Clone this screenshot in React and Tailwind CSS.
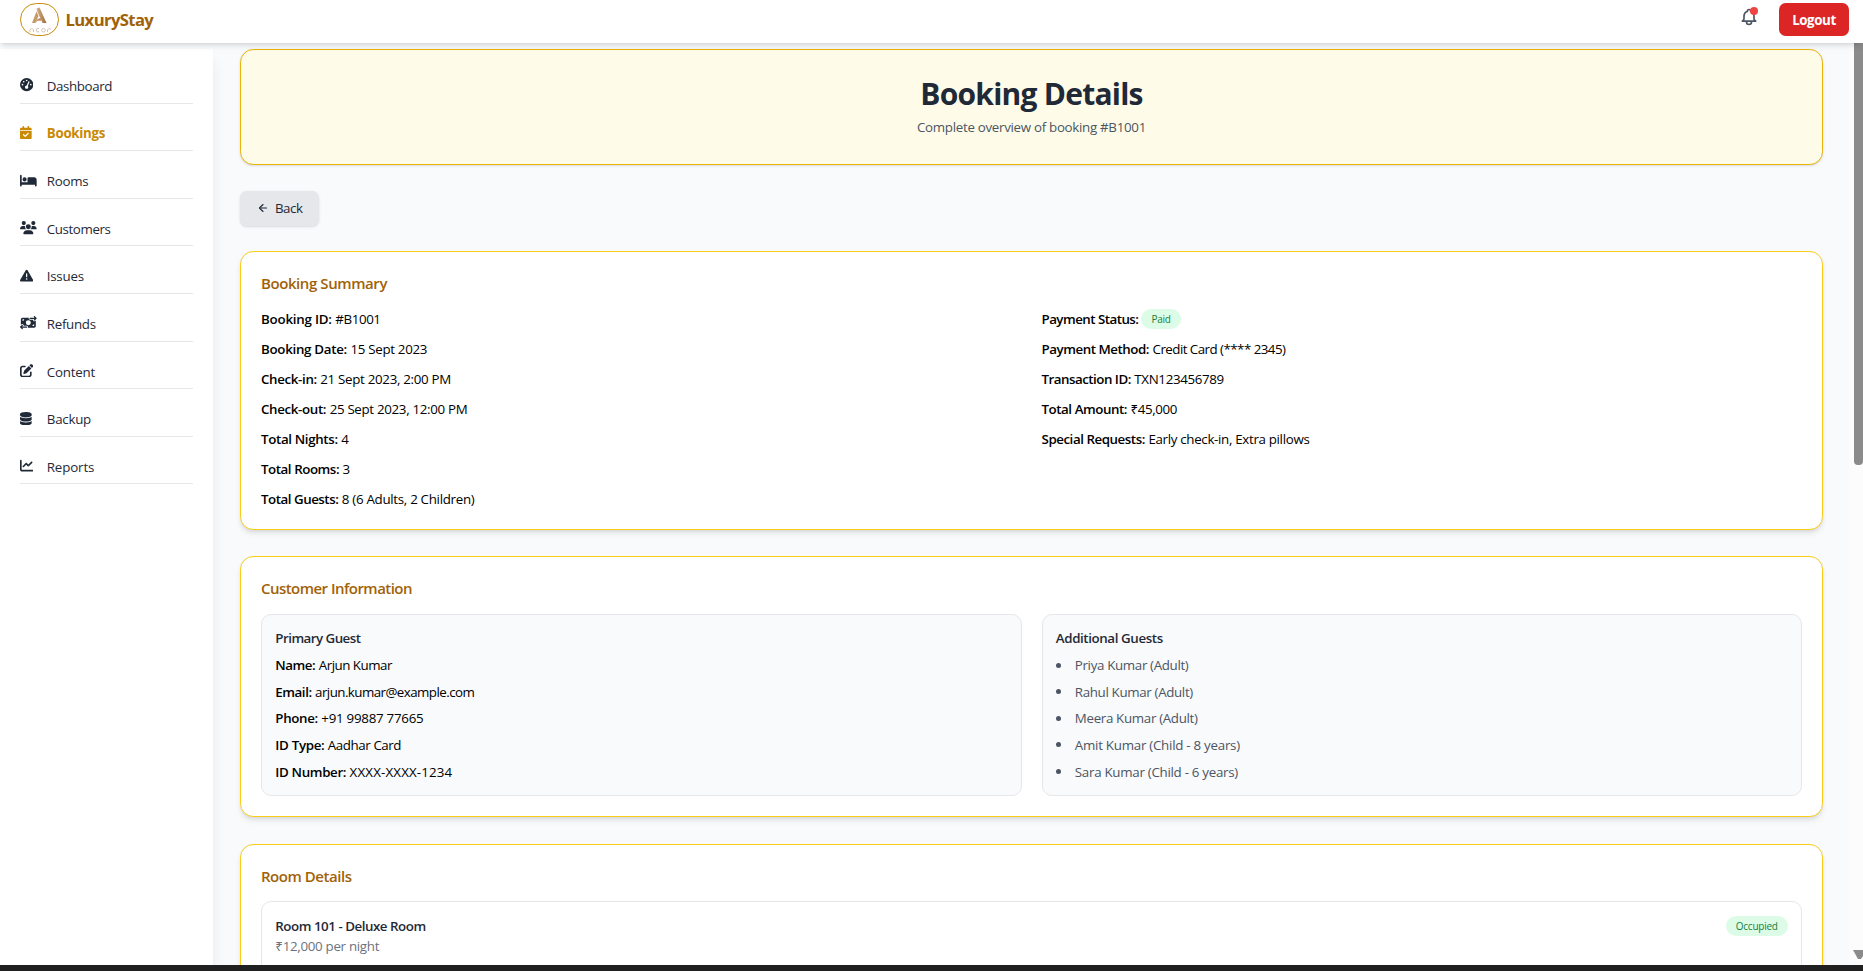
import React from "react";
import { FaGaugeHigh, FaCalendarCheck, FaBed, FaUsers, FaTriangleExclamation, FaMoneyBillTransfer, FaPenToSquare, FaDatabase, FaChartLine } from "react-icons/fa6";
import { ArrowLeft } from "lucide-react";

const NAV = [
  { label: "Dashboard", Icon: FaGaugeHigh, w: "w-[13.3px]", t: "tracking-[-0.4px]" },
  { label: "Bookings", Icon: FaCalendarCheck, w: "w-[11.7px]", active: true },
  { label: "Rooms", Icon: FaBed, w: "w-[16.7px]", t: "tracking-[-0.3px]" },
  { label: "Customers", Icon: FaUsers, w: "w-[16.7px]", t: "tracking-[-0.4px]" },
  { label: "Issues", Icon: FaTriangleExclamation, w: "w-[13.3px]", t: "tracking-[-0.25px]" },
  { label: "Refunds", Icon: FaMoneyBillTransfer, w: "w-[16.7px]", t: "tracking-[-0.3px]" },
  { label: "Content", Icon: FaPenToSquare, w: "w-[13.3px]", t: "tracking-[-0.2px]" },
  { label: "Backup", Icon: FaDatabase, w: "w-[11.7px]", t: "tracking-[-0.25px]" },
  { label: "Reports", Icon: FaChartLine, w: "w-[13.3px]", t: "tracking-[-0.15px]" },
];

const SUMMARY = [
  ["Booking ID", "#B1001", "tracking-[-0.4px]", "tracking-[-0.22px]"],
  ["Booking Date", "15 Sept 2023", "tracking-[-0.3px]", "tracking-[-0.3px]"],
  ["Check-in", "21 Sept 2023, 2:00 PM", "tracking-[-0.31px]"],
  ["Check-out", "25 Sept 2023, 12:00 PM", "tracking-[-0.32px]"],
  ["Total Nights", "4", ""],
  ["Total Rooms", "3", "", "tracking-[-0.45px]"],
  ["Total Guests", "8 (6 Adults, 2 Children)", "tracking-[-0.3px]", "tracking-[-0.48px]"],
];

const PAYMENT = [
  ["Payment Method", "Credit Card (**** 2345)", "tracking-[-0.53px]", "tracking-[-0.46px]"],
  ["Transaction ID", "TXN123456789", "tracking-[-0.35px]", "tracking-[-0.5px]"],
  ["Total Amount", "₹45,000", "tracking-[-0.4px]", "tracking-[-0.45px]"],
  ["Special Requests", "Early check-in, Extra pillows", "tracking-[-0.32px]", "tracking-[-0.45px]"],
];

const GUEST = [
  ["Name", "Arjun Kumar", "tracking-[-0.5px]", "tracking-[-0.45px]"],
  ["Email", "arjun.kumar@example.com", "tracking-[-0.55px]", "tracking-[-0.45px]"],
  ["Phone", "+91 99887 77665", "tracking-[-0.26px]"],
  ["ID Type", "Aadhar Card", "tracking-[-0.42px]", "tracking-[-0.32px]"],
  ["ID Number", "XXXX-XXXX-1234", "tracking-[0.15px]"],
];

const GUESTS = [
  ["Priya Kumar (Adult)", "tracking-[-0.34px]"],
  ["Rahul Kumar (Adult)", "tracking-[-0.34px]"],
  ["Meera Kumar (Adult)", "tracking-[-0.33px]"],
  ["Amit Kumar (Child - 8 years)", "tracking-[-0.26px]"],
  ["Sara Kumar (Child - 6 years)", "tracking-[-0.28px]"],
];

function Field({ label, labelClass = "tracking-[-0.35px]", valueClass = "", children }) {
  return (
    <p className="whitespace-nowrap">
      <span className={`font-semibold ${labelClass}`}>{label}:</span> <span className={valueClass}>{children}</span>
    </p>
  );
}

function Badge({ children }) {
  return (
    <span className="inline-flex h-5 items-center rounded-full bg-[#dcfce7] px-[10px] text-[10px] leading-none tracking-[-0.25px] text-[#15803d]">
      {children}
    </span>
  );
}

function Card({ title, titleClass = "mb-[13.33px] tracking-[-0.46px]", children }) {
  return (
    <section className="mb-[26.67px] rounded-[13.3px] border border-[#facc15] bg-white p-5 shadow-md">
      <h2 className={`text-[15px] leading-[23.33px] font-semibold text-[#a16207] ${titleClass}`}>{title}</h2>
      {children}
    </section>
  );
}

function Logo() {
  return (
    <div className="flex h-[33px] w-[39px] items-center justify-center overflow-hidden rounded-full border border-[#ca8a04] bg-white">
      <svg viewBox="0 0 39 33" className="h-[33px] w-[39px] shrink-0">
        <defs>
          <linearGradient id="gold" x1="0" x2="1">
            <stop offset="0" stopColor="#d9b48a" />
            <stop offset="1" stopColor="#9a6a3c" />
          </linearGradient>
        </defs>
        <path d="M16.500 5.500 L19.500 4.500 L26.500 20 H22.500 L17 8 Z" fill="url(#gold)" />
        <path d="M16.500 8.500 L18.500 13 L15.500 20 H12 Z" fill="#c99a68" />
        <path d="M15.500 19.500 Q18 14 21.500 15.500 L20.500 18 Q18 16.500 15.500 19.500 Z" fill="#b98a5c" />
        <g fill="none" stroke="#d6c4b4" strokeWidth="1">
          <path d="M10 29 V26.500 Q12 24.500 13.500 26.500 V29" />
          <path d="M19 25.500 H17 Q15.500 27 17 28.800 H19" />
          <circle cx="23.500" cy="27.200" r="1.800" />
          <path d="M27.500 29 V26.500 Q29 25 31 26" />
        </g>
      </svg>
    </div>
  );
}

function Bell() {
  return (
    <div className="relative mb-[6px] h-5 w-[17px]">
      <svg viewBox="0 0 24 24" className="-ml-[1.5px] h-[20px] w-[20px]" fill="none" stroke="#4b5563" strokeWidth="2" strokeLinecap="round" strokeLinejoin="round">
        <path d="M15 17h5l-1.405-1.405A2.032 2.032 0 0118 14.158V11a6.002 6.002 0 00-4-5.659V5a2 2 0 10-4 0v.341C7.670 6.165 6 8.388 6 11v3.159c0 .538-.214 1.055-.595 1.436L4 17h5m6 0v1a3 3 0 11-6 0v-1m6 0H9" />
      </svg>
      <span className="absolute top-0 -right-[1px] h-2 w-2 rounded-full bg-[#ef4444]" />
    </div>
  );
}

export default function App() {
  return (
    <div className="flex h-[971px] w-[1863px] flex-col overflow-hidden bg-[#f9fafb] font-['Open_Sans','Noto_Sans',sans-serif] text-[13.33px] leading-5 text-black">
      <header className="z-10 flex h-[43px] shrink-0 items-center justify-between bg-white pr-[14px] pb-[4px] pl-5 shadow-md">
        <div className="flex items-center gap-[6.5px]">
          <Logo />
          <span className="text-[16.67px] font-bold tracking-[-0.62px] text-[#a16207]">LuxuryStay</span>
        </div>
        <div className="flex items-center gap-[22px]">
          <Bell />
          <button className="h-[33px] w-[70px] rounded-[6.67px] bg-[#dc2626] text-[13.33px] font-bold tracking-[-0.4px] text-white">Logout</button>
        </div>
      </header>

      <div className="flex min-h-0 flex-1">
        <aside className="mt-[6px] w-[213px] shrink-0 bg-white px-5 pt-[20.2px] shadow-lg">
          <nav className="flex flex-col gap-[13.3px]">
            {NAV.map(({ label, Icon, w, t, active }) => (
              <a
                key={label}
                className={
                  active
                    ? "flex items-center border-b border-[#e5e7eb] py-[6.67px] font-bold tracking-[-0.3px] text-[#ca8a04]"
                    : `flex items-center border-b border-[#e5e7eb] py-[6.67px] font-medium text-[#1f2937] ${t}`
                }
              >
                <span className="flex w-[26.8px] items-center pb-[1.5px]">
                  <Icon className={`h-[13.3px] ${w}`} />
                </span>
                {label}
              </a>
            ))}
          </nav>
        </aside>

        <main className="min-w-0 flex-1 overflow-hidden pt-[6.3px] pr-[26px] pl-[27px]">
          <div className="rounded-[13.3px] border border-[#eab308] bg-[#fefce8] p-[26.67px] text-center shadow-sm">
            <h1 className="text-[30px] leading-[33.33px] font-bold tracking-[-0.76px] text-[#1f2937]">Booking Details</h1>
            <p className="mt-[6.67px] tracking-[-0.3px] text-[#4b5563]">Complete overview of booking #B1001</p>
          </div>

          <button className="mt-[26.3px] mb-[25px] flex h-[34.7px] w-[79px] items-center gap-[6px] rounded-[6.67px] bg-[#e5e7eb] pb-px pl-[17px] text-[#1f2937] shadow-sm">
            <ArrowLeft className="h-[12px] w-[12px]" strokeWidth={2.2} />
            <span className="tracking-[-0.5px]">Back</span>
          </button>

          <Card title="Booking Summary" titleClass="mb-[13.8px] tracking-[-0.42px]">
            <div className="grid grid-cols-2 gap-5">
              <div className="flex flex-col gap-[10px]">
                {SUMMARY.map(([k, v, vc, lc]) => (
                  <Field key={k} label={k} labelClass={lc} valueClass={vc}>{v}</Field>
                ))}
              </div>
              <div className="flex flex-col gap-[10px]">
                <div className="flex h-5 items-center gap-[3px]">
                  <Field label="Payment Status" labelClass="tracking-[-0.53px]" />
                  <span className="mt-[1.5px] flex">
                    <Badge>Paid</Badge>
                  </span>
                </div>
                {PAYMENT.map(([k, v, vc, lc]) => (
                  <Field key={k} label={k} labelClass={lc} valueClass={vc}>{v}</Field>
                ))}
              </div>
            </div>
          </Card>

          <Card title="Customer Information" titleClass="mb-[13.33px] tracking-[-0.54px]">
            <div className="grid grid-cols-2 gap-5">
              <div className="flex flex-col gap-[6.67px] rounded-[10px] border border-[#e5e7eb] bg-[#f9fafb] p-[13.33px]">
                <h3 className="font-semibold tracking-[-0.53px] text-[#1f2937]">Primary Guest</h3>
                {GUEST.map(([k, v, vc, lc]) => (
                  <Field key={k} label={k} labelClass={lc} valueClass={vc}>{v}</Field>
                ))}
              </div>
              <div className="rounded-[10px] border border-[#e5e7eb] bg-[#f9fafb] p-[13.33px]">
                <h3 className="mb-[6.67px] font-semibold tracking-[-0.4px] text-[#1f2937]">Additional Guests</h3>
                <ul className="flex flex-col gap-[6.67px] text-[#4b5563]">
                  {GUESTS.map(([g, t]) => (
                    <li key={g} className={`flex items-center ${t}`}>
                      <span className="mr-[14px] h-[5px] w-[5px] rounded-full bg-[#4b5563]" />
                      {g}
                    </li>
                  ))}
                </ul>
              </div>
            </div>
          </Card>

          <Card title="Room Details">
            <div className="flex h-[120px] items-start justify-between rounded-[10px] border border-[#e5e7eb] p-[13.33px]">
              <div>
                <h3 className="font-semibold tracking-[-0.47px] text-[#1f2937]">Room 101 - Deluxe Room</h3>
                <p className="tracking-[-0.3px] text-[#6b7280]">₹12,000 per night</p>
              </div>
              <Badge>Occupied</Badge>
            </div>
          </Card>
        </main>

        <div className="flex w-[14px] shrink-0 flex-col items-end justify-between overflow-hidden bg-[#fcfcfc] pb-[5px]">
          <div className="h-[422px] w-[9px] rounded-b-[4px] bg-[#8b8b8b]" />
          <svg viewBox="0 0 10 10" className="h-[10px] w-[10px]">
            <path d="M0 0 H10 V6 L8 9 H5 Z" fill="#8b8b8b" />
          </svg>
        </div>
      </div>
      <div className="z-10 h-[6px] shrink-0 bg-[#202020]" />
    </div>
  );
}
